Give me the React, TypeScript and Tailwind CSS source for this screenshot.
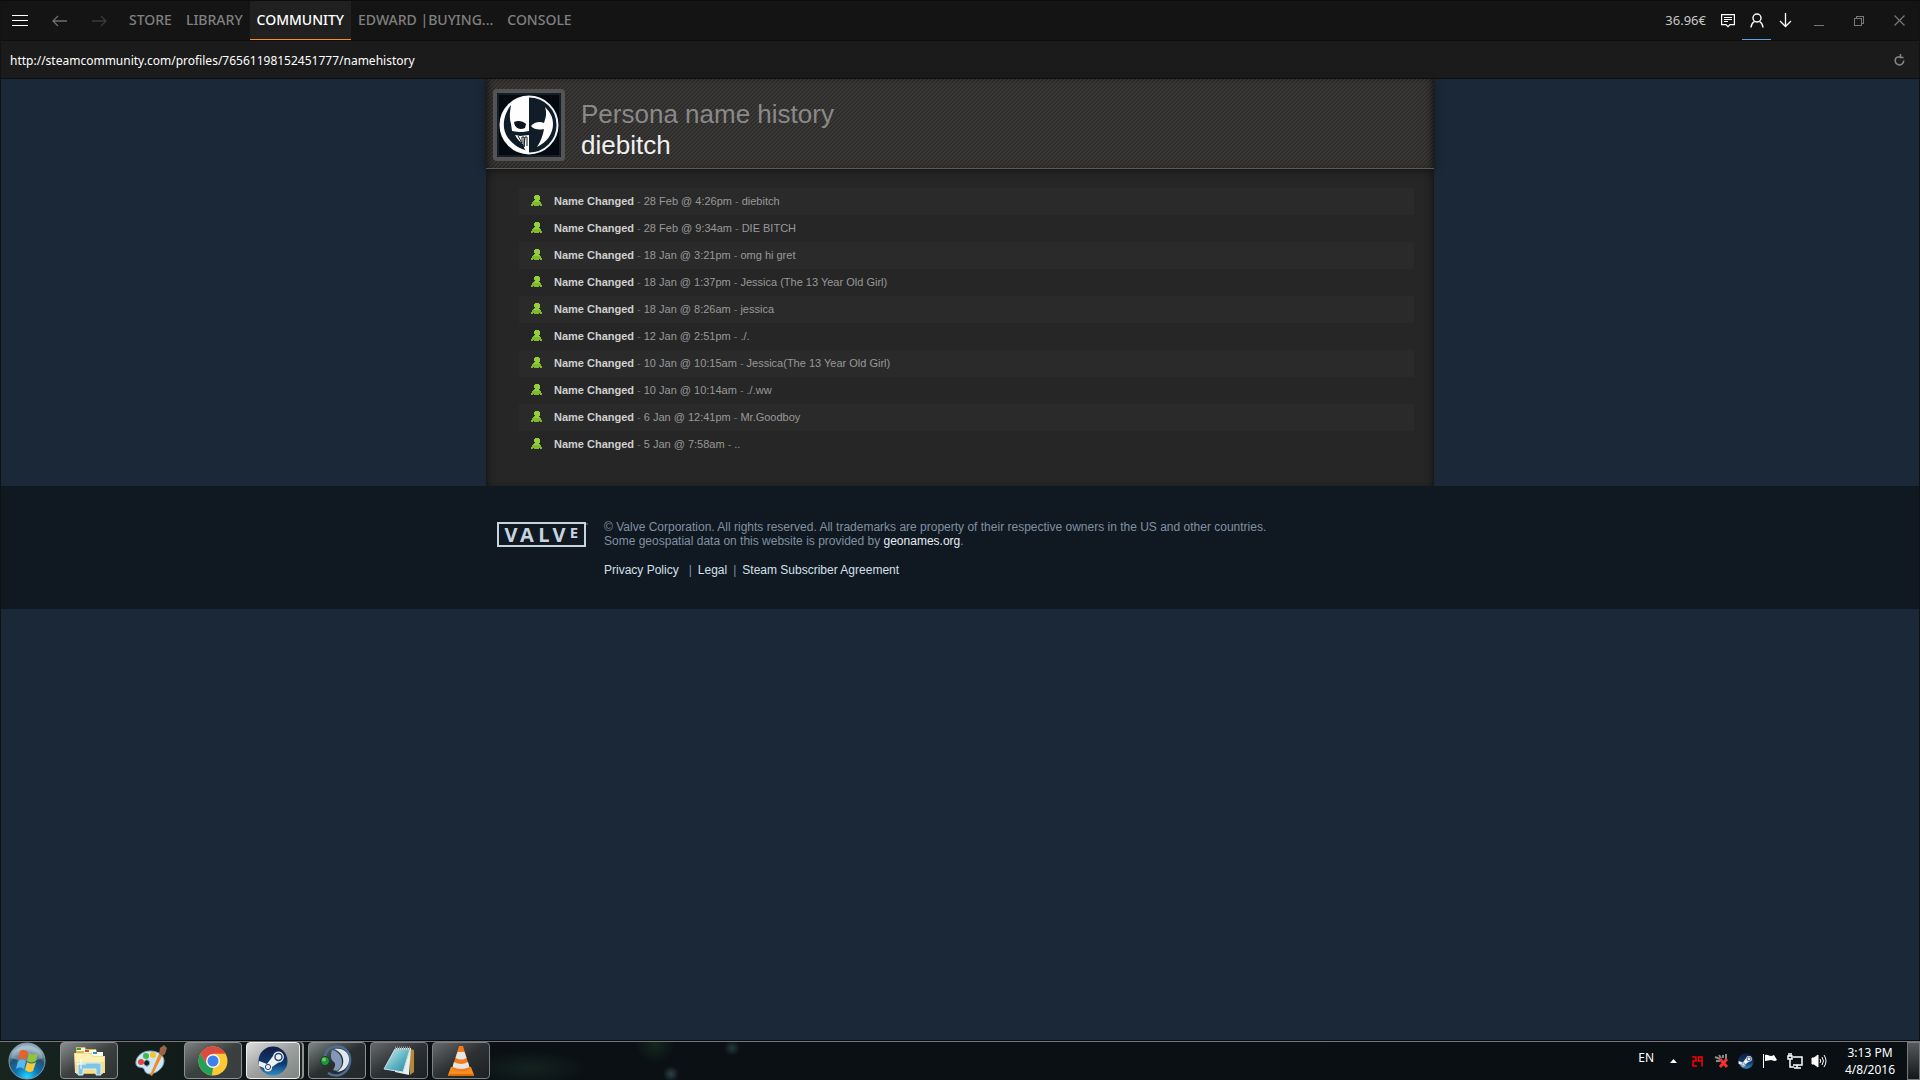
import { useState } from "react";
import type { ReactNode } from "react";

interface HistoryEntry {
  date: string;
  name: string;
}

const history: HistoryEntry[] = [
  { date: "28 Feb @ 4:26pm", name: "diebitch" },
  { date: "28 Feb @ 9:34am", name: "DIE BITCH" },
  { date: "18 Jan @ 3:21pm", name: "omg hi gret" },
  { date: "18 Jan @ 1:37pm", name: "Jessica (The 13 Year Old Girl)" },
  { date: "18 Jan @ 8:26am", name: "jessica" },
  { date: "12 Jan @ 2:51pm", name: "./." },
  { date: "10 Jan @ 10:15am", name: "Jessica(The 13 Year Old Girl)" },
  { date: "10 Jan @ 10:14am", name: "./.ww" },
  { date: "6 Jan @ 12:41pm", name: "Mr.Goodboy" },
  { date: "5 Jan @ 7:58am", name: ".." },
];

const tabs = ["STORE", "LIBRARY", "COMMUNITY", "EDWARD |BUYING...", "CONSOLE"];

function IconButton({ label, className = "", children }: { label: string; className?: string; children: ReactNode }) {
  return (
    <button aria-label={label} className={`flex h-full shrink-0 items-center justify-center ${className}`}>
      {children}
    </button>
  );
}

function TopBar() {
  const [active, setActive] = useState("COMMUNITY");

  return (
    <header className="flex h-10 items-stretch border-t border-[#0c0c0c] bg-[#141414] font-['Noto_Sans','Open_Sans',sans-serif]">
      <IconButton label="Menu" className="w-[38px] text-white">
        <svg width="16" height="13" stroke="currentColor" shapeRendering="crispEdges">
          <path d="M0 1.5h16M0 6.5h16M0 11.5h16" />
        </svg>
      </IconButton>
      <IconButton label="Back" className="w-10 text-[#6e6e6e]">
        <svg width="15" height="12" fill="none" stroke="currentColor" strokeWidth="1.3">
          <path d="M1 6h14M6 1L1 6l5 5" />
        </svg>
      </IconButton>
      <IconButton label="Forward" className="mr-[3px] w-10 text-[#3a3a3a]">
        <svg width="15" height="12" fill="none" stroke="currentColor" strokeWidth="1.3">
          <path d="M0 6h14M9 1l5 5-5 5" />
        </svg>
      </IconButton>
      <nav className="flex">
        {tabs.map((tab) => (
          <button
            key={tab}
            onClick={() => setActive(tab)}
            className={`border-b px-[7px] text-sm font-medium whitespace-nowrap ${
              active === tab ? "border-[#ff8f1c] bg-[#202020] text-white" : "border-transparent text-[#808080]"
            }`}
          >
            {tab}
          </button>
        ))}
      </nav>
      <div className="ml-auto flex items-center">
        <span className="mr-2 text-[13px] text-[#c8c8c8]">36.96€</span>
        <IconButton label="Chat" className="w-7 text-white">
          <svg width="14" height="15" fill="none" stroke="currentColor" strokeWidth="1.2">
            <path d="M.6 1.6h12.800v10H9l-2 2-2-2H.6zM3 4.500h8M3 6.500h8M3 8.500h4" />
          </svg>
        </IconButton>
        <IconButton label="Friends" className="w-[29px] border-b border-[#5ea2e8] text-white">
          <svg width="14" height="15" fill="none" stroke="currentColor" strokeWidth="1.4">
            <circle cx="7" cy="5" r="4" />
            <path d="M1 14.500c.3-3 1.600-5 3.500-6M13 14.500c-.3-3-1.600-5-3.500-6" />
          </svg>
        </IconButton>
        <IconButton label="Downloads" className="w-7 text-white">
          <svg width="13" height="15" fill="none" stroke="currentColor" strokeWidth="1.3">
            <path d="M6.500 0v13.500M1 8l5.500 5.500L12 8" />
          </svg>
        </IconButton>
        <IconButton label="Minimize" className="w-10 text-[#777]">
          <svg width="10" height="10" stroke="currentColor" shapeRendering="crispEdges">
            <path d="M0 9.500h10" />
          </svg>
        </IconButton>
        <IconButton label="Restore" className="w-10 text-[#777]">
          <svg width="10" height="10" fill="none" stroke="currentColor" shapeRendering="crispEdges">
            <path d="M.5 2.500h7v7h-7zM2.500 2.500v-2h7v7h-2" />
          </svg>
        </IconButton>
        <IconButton label="Close" className="w-10 text-[#777]">
          <svg width="11" height="11" fill="none" stroke="currentColor" strokeWidth="1.200">
            <path d="M.5.5l10 10M10.500.5l-10 10" />
          </svg>
        </IconButton>
      </div>
    </header>
  );
}

function AddressBar() {
  return (
    <div className="flex h-[39px] items-center border-y border-[#0e0e0e] bg-[#1b1b1b] pl-[9px] font-['Noto_Sans','Open_Sans',sans-serif]">
      <input
        aria-label="Address"
        defaultValue="http://steamcommunity.com/profiles/76561198152451777/namehistory"
        className="flex-1 bg-transparent pt-[2px] text-xs text-white outline-none"
      />
      <IconButton label="Reload" className="w-[39px] text-[#888]">
        <svg width="11" height="12" fill="none" stroke="currentColor" strokeWidth="1.500">
          <path d="M2.800 3.200A4.300 4.300 0 1 0 9.800 6.500M6 3h-3M6.500 0v3.500h3" />
        </svg>
      </IconButton>
    </div>
  );
}

function Avatar() {
  return (
    <div className="h-[72px] w-[72px] shrink-0 rounded-sm bg-[#545454] p-1">
      <svg viewBox="0 0 64 64" className="h-full w-full" role="img" aria-label="diebitch">
        <rect width="64" height="64" fill="#050a10" />
        <rect x="1" y="1" width="62" height="62" fill="none" stroke="#26333d" />
        <circle cx="32" cy="32" r="28.500" fill="#101c27" stroke="#f4f8fa" strokeWidth="2" />
        {/* skull half */}
        <path d="M32 3.500A28.500 28.500 0 0 0 32 60.500v-2.500C20 56 9 47 7 35 6 27 9 18 14 12c-1 7-2 13 0 19l1 7 9 1 8-3z" fill="#fff" />
        <path d="M17 29c4-2 9-1 12 2l-1 4c-5 2-10 1-11-6z" fill="#0c151d" />
        <path d="M15 36l6 1h8l3-2v3l-6 1-10-1z" fill="#fff" />
        <path d="M18 42l5 1 9-1v18c-4-2-5-5-6-9-3-2-6-5-8-9z" fill="#fff" />
        <path d="M21 43l4 7v-6h2v10l1-10h2v9" fill="none" stroke="#101c27" />
        {/* mask half */}
        <path d="M34 33c3-4 9-5 13-3 2-6 3-10 1-16 5 5 8 10 8 17 0 10-6 18-16 23 4-6 6-12 7-18-4 1-10 1-13-3z" fill="#fff" />
      </svg>
    </div>
  );
}

function NameHistory() {
  return (
    <main className="mx-auto min-h-[407px] max-w-[948px] bg-[#262626] font-['Liberation_Sans',Arial,sans-serif] shadow-[inset_7px_0_7px_-5px_#151515,inset_-7px_0_7px_-5px_#151515]">
      <div className="flex h-[90px] items-center border-b border-[#5a5a5a] bg-[linear-gradient(135deg,#3b3a38_12%,#2c2b2a_12%,#2c2b2a_25%,#3b3a38_25%,#3b3a38_62%,#2c2b2a_62%,#2c2b2a_75%,#3b3a38_75%)] bg-size-[4px_4px] pt-[2px] pl-[7px] shadow-[inset_7px_0_7px_-5px_#151515,inset_-7px_0_7px_-5px_#151515,0_2px_6px_#161616]">
        <Avatar />
        <h1 className="ml-4 pt-[10px] text-[26px] leading-[31px] text-[#898989]">
          Persona name history
          <br />
          <span className="text-[#f0f0f0]">diebitch</span>
        </h1>
      </div>
      <ul className="pt-[19px] pr-5 pl-[33px] text-[11px]">
        {history.map((entry) => (
          <li key={entry.date} className="flex h-[27px] items-center pl-3 text-[#999] odd:bg-[#2a2a2a]">
            <svg width="11" height="13" className="mr-3 shrink-0" shapeRendering="crispEdges">
              <path d="M4 0h4v1h1v4H8v1h1v1h1v2h1v2H9v-1H8v1H3v-1H2v1H0V9h1V7h1V6h1V5h1V4H3V1h1z" fill="#7fb92e" />
              <path d="M4 0h4v1h1v4H8v1h1v1H3V6h1V4H3V1h1z" fill="#93cf3a" />
            </svg>
            <p>
              <b className="text-[#d0d0d0]">Name Changed</b>
              <span className="mx-[3px] text-[#666]">-</span>
              {entry.date}
              <span className="mx-[3px] text-[#777]">-</span>
              {entry.name}
            </p>
          </li>
        ))}
      </ul>
    </main>
  );
}

function ValveLogo() {
  return (
    <svg width="92" height="25" role="img" aria-label="Valve" className="mt-[2px] shrink-0 font-['Open_Sans','Noto_Sans',sans-serif]">
      <rect x="1" y="1" width="87" height="23" fill="none" stroke="#c6d4df" strokeWidth="2" />
      <g fill="#c6d4df" fontWeight="bold" textAnchor="middle">
        <text x="14" y="20" fontSize="20">V</text>
        <text x="30" y="20" fontSize="20">A</text>
        <text x="47" y="20" fontSize="20">L</text>
        <text x="62" y="20" fontSize="20">V</text>
        <text x="77" y="16" fontSize="15">E</text>
      </g>
      <circle cx="90" cy="2" r="1" fill="#53606c" />
    </svg>
  );
}

function Footer() {
  return (
    <footer className="bg-[#101821] pt-[34px] pb-8 font-['Liberation_Sans',Arial,sans-serif] text-xs leading-[14px] text-[#8091a2]">
      <div className="mx-auto flex max-w-[940px] pl-[7px]">
        <ValveLogo />
        <div className="ml-[15px]">
          <p>
            © Valve Corporation. All rights reserved. All trademarks are property of their respective owners in the US and other countries.
            <br />
            Some geospatial data on this website is provided by{" "}
            <a href="#geonames" className="text-[#e6eef5]">geonames.org</a>.
          </p>
          <p className="mt-[15px]">
            <a href="#privacy" className="text-[#d4e0ea]">Privacy Policy</a>
            <span className="mr-[6px] ml-[10px]">|</span>
            <a href="#legal" className="text-[#d4e0ea]">Legal</a>
            <span className="mx-[6px]">|</span>
            <a href="#agreement" className="text-[#d4e0ea]">Steam Subscriber Agreement</a>
          </p>
        </div>
      </div>
    </footer>
  );
}

function StartIcon() {
  return (
    <svg width="38" height="38" viewBox="0 0 38 38">
      <defs>
        <radialGradient id="orb" cx=".5" cy=".95" r=".8">
          <stop offset="0" stopColor="#27d5ff" />
          <stop offset=".4" stopColor="#0b78b8" />
          <stop offset=".75" stopColor="#24506f" />
          <stop offset="1" stopColor="#8fa9b9" />
        </radialGradient>
      </defs>
      <circle cx="19" cy="19" r="18" fill="url(#orb)" stroke="#7f9db1" />
      <path d="M3 16a16.500 16.500 0 0 1 32 0c-9 4-22 4-32 0z" fill="#dce8ef" opacity=".35" />
      <path d="M12 9c3-2 6-1 8 1l-2 8c-3-2-5-2-8 0z" fill="#e8602b" />
      <path d="M21 11c3 2 6 2 9 0l-2 8c-3 2-6 2-9 0z" fill="#93c33b" />
      <path d="M10 19c3-2 5-2 8 0l-2 8c-3-2-5-2-8 0z" fill="#5bb6ee" />
      <path d="M19 20c3 2 6 2 9 0l-3 9c-3 2-5 1-8-1z" fill="#fbc73b" />
    </svg>
  );
}

function ExplorerIcon() {
  return (
    <svg width="34" height="32" viewBox="0 0 34 32">
      <path d="M4 2h9l1 2h10l1 3h6v22H4z" fill="#d9b75a" />
      <path d="M5 3h8v3H5z" fill="#fffbe4" />
      <path d="M5 3h4v2H5z" fill="#28a735" />
      <path d="M12 5h12v3H12z" fill="#fffbe4" />
      <path d="M13 5h4v2h-4z" fill="#d84a2b" />
      <path d="M20 7h11v4H20z" fill="#fffbe4" />
      <path d="M21 7h4v2h-4z" fill="#2990d6" />
      <path d="M2 8h17l2 3h12v17H3z" fill="#f3df8d" />
      <path d="M3 9h15l2 3h12v5H3z" fill="#fbf0b5" />
      <path d="M6 30V20q0-2 2-2h19q2 0 2 2v10h-5v-6H11v6z" fill="#80c4e6" stroke="#d8f1fb" />
      <path d="M9 14v10M4 19h10" stroke="#fff" />
    </svg>
  );
}

function PaintIcon() {
  return (
    <svg width="34" height="34" viewBox="0 0 34 34">
      <path d="M16 7C7 7 1 14 2 20c1 4 5 3 7 4s1 5 6 6c8 0 15-7 15-13S24 7 16 7zm-1 14a3 3 0 1 1 0-4 3 3 0 0 1 0 4z" fill="#cfe6f5" stroke="#7fa9c5" />
      <circle cx="7" cy="18" r="3" fill="#e3483d" />
      <circle cx="12" cy="12" r="3" fill="#42b649" />
      <circle cx="19" cy="11" r="3" fill="#f6c52d" />
      <path d="M25 10l3 2-10 20-2-1z" fill="#f08a25" />
      <path d="M25 10l1-6 4-3 3 3-2 6-3 2z" fill="#9b6444" />
    </svg>
  );
}

function ChromeIcon() {
  return (
    <svg width="30" height="30" viewBox="0 0 30 30">
      <circle cx="15" cy="15" r="14.500" fill="#fcc934" />
      <path d="M2.400 7.800A14.500 14.500 0 0 1 27.600 7.800H15L8.700 18.600z" fill="#dd4b3e" />
      <path d="M2.400 7.800L8.700 18.600 15 22.200 13.800 29.400A14.500 14.500 0 0 1 2.400 7.800z" fill="#23a05c" />
      <circle cx="15" cy="15" r="7" fill="#f5f5f5" />
      <circle cx="15" cy="15" r="5.500" fill="#3f7fee" />
    </svg>
  );
}

function SteamIcon({ size }: { size: number }) {
  return (
    <svg width={size} height={size} viewBox="0 0 30 30">
      <defs>
        <linearGradient id="steam" x2="0" y2="1">
          <stop stopColor="#101c45" />
          <stop offset=".6" stopColor="#0e3c70" />
          <stop offset="1" stopColor="#2f8fc6" />
        </linearGradient>
      </defs>
      <circle cx="15" cy="15" r="14.500" fill="url(#steam)" />
      <path d="M1 15l8 3 6-8a5.500 5.500 0 1 1 5.500 6.500L14 21a4 4 0 0 1-8 1L1 20z" fill="#f0f0f0" />
      <circle cx="20.500" cy="11" r="3.500" fill="#f0f0f0" stroke="#24477a" strokeWidth="1.500" />
      <circle cx="10" cy="21" r="2.600" fill="none" stroke="#24477a" />
    </svg>
  );
}

function TeamSpeakIcon() {
  return (
    <svg width="34" height="34" viewBox="0 0 34 34" fill="none">
      <path d="M5 12C7 1 21 0 27 7c6 8 3 20-7 24-5 1-9 0-12-2" stroke="#4c6c92" strokeWidth="2.500" />
      <path d="M14 5c10-2 16 5 15 12-1 6-5 10-12 11 5-4 7-8 6-13-1-5-4-8-9-10z" fill="#e1e9f2" />
      <path d="M12 6c6 1 10 6 10 12 0 4-2 7-5 9l-4-1c2-3 3-6 1-8-3-2-4-6-2-12z" fill="#8198b8" />
      <circle cx="5" cy="17" r="4.500" fill="#21913b" stroke="#153e27" />
      <circle cx="4" cy="15.500" r="2" fill="#65cb6a" />
    </svg>
  );
}

function NotepadIcon() {
  return (
    <svg width="32" height="32" viewBox="0 0 32 32">
      <defs>
        <linearGradient id="pad" x2="1" y2="1">
          <stop stopColor="#d5f0f4" />
          <stop offset=".55" stopColor="#5fb4c3" />
          <stop offset="1" stopColor="#2b8399" />
        </linearGradient>
      </defs>
      <path d="M27 4l4 1v22l-4 3z" fill="#b88736" />
      <path d="M13 3h15l-2 27-14-3z" fill="#e9eff0" />
      <path d="M12 4h15l-7 23L1 24z" fill="url(#pad)" stroke="#c7e2e6" />
      <path d="M12 3h16" stroke="#969696" strokeWidth="3" strokeDasharray="1 1" />
    </svg>
  );
}

function VlcIcon() {
  return (
    <svg width="28" height="32" viewBox="0 0 28 32">
      <path d="M4 22h20l3 8v1H1v-1z" fill="#f79020" />
      <path d="M1 29h26v2H1z" fill="#d96c0c" />
      <path d="M12 1h4l7 23q-9 5-18 0z" fill="#f47b17" />
      <path d="M10.500 7h7l2 6q-5 3-11 0z" fill="#e6e6e6" />
      <path d="M7 17q7 4 14 0l1.500 5q-8 4-17 0z" fill="#e6e6e6" />
    </svg>
  );
}

const taskApps = [
  { label: "Windows Explorer", icon: <ExplorerIcon />, frame: "w-[58px] border-[#8d9191] bg-linear-to-br from-[#8b8e8e] via-[#3c4041] to-[#2c3131]" },
  { label: "Paint", icon: <PaintIcon />, frame: "w-[58px] border-transparent" },
  { label: "Google Chrome", icon: <ChromeIcon />, frame: "w-[58px] border-[#8d9191] bg-linear-to-br from-[#7d8180] via-[#3a3f3f] to-[#383d40]" },
  { label: "Steam", icon: <SteamIcon size={30} />, frame: "mr-1 w-[54px] border-[#f0f0f0] bg-linear-to-br from-[#dcdcdc] via-[#9da09f] to-[#7d8582] shadow-[2px_0_0_#1c2020,4px_0_0_#8d9492]" },
  { label: "TeamSpeak", icon: <TeamSpeakIcon />, frame: "w-[58px] border-[#8d9191] bg-linear-to-br from-[#7e8885] via-[#2a3030] to-[#23282a]" },
  { label: "Notepad", icon: <NotepadIcon />, frame: "w-[58px] border-[#7d8181] bg-linear-to-br from-[#676b6d] via-[#2d3133] to-[#1d2123]" },
  { label: "VLC", icon: <VlcIcon />, frame: "w-[58px] border-[#7d8181] bg-linear-to-br from-[#676b6d] via-[#2d3133] to-[#1d2123]" },
];

function Taskbar() {
  return (
    <footer className="border-t border-[#0a0c0f] font-['Noto_Sans','Open_Sans',sans-serif] text-white">
      <div className="flex h-[39px] items-stretch border-t border-[#74787c] bg-linear-to-r from-[#18251f] via-[#0a1014] via-20% to-[#0a0f13]">
        <button aria-label="Start" className="flex w-[60px] items-center pl-2">
          <StartIcon />
        </button>
        <div className="flex gap-1">
          {taskApps.map((app) => (
            <button
              key={app.label}
              aria-label={app.label}
              className={`flex h-[37px] items-center justify-center rounded-sm border ${app.frame}`}
            >
              {app.icon}
            </button>
          ))}
        </div>
        <div className="flex-1 bg-[radial-gradient(circle_at_181px_32px,#2c4247_0px,transparent_8px),radial-gradient(circle_at_242px_6px,#24393a_0px,transparent_8px),radial-gradient(ellipse_60px_18px_at_40px_26px,#13231f,transparent),radial-gradient(ellipse_20px_20px_at_165px_2px,#15261f,transparent)]" />
        <div className="flex items-center">
          <button className="mr-4 pb-[6px] text-xs">EN</button>
          <button aria-label="Show hidden icons" className="mr-[15px]">
            <svg width="7" height="4" fill="#fff"><path d="M3.500 0L7 4H0z" /></svg>
          </button>
          <svg width="11" height="11" fill="none" stroke="#f00" strokeWidth="1.500" className="mr-[11px]">
            <path d="M0 1h4v4H1v5h4M10 10.500V1H6.500v4H10" />
          </svg>
          <svg width="16" height="16" className="mr-2">
            <path d="M1 4l5 2M2 8h4M5 2l2 3M9 2v3M12 1v5" stroke="#888" strokeWidth="2" />
            <path d="M6 6l7 8M13 6l-7 8" stroke="#e33" strokeWidth="3" />
          </svg>
          <SteamIcon size={16} />
          <svg width="16" height="16" className="ml-2" fill="#fff">
            <path d="M1 1h1v14H1zM3 2c3-1 4 1 6 1s2-1 3-1l3 5c-3 2-4 0-6 0S5 8 3 8z" />
          </svg>
          <svg width="16" height="16" className="ml-[9px]" fill="none" stroke="#fff" strokeWidth="1.500">
            <path d="M6 4h9v8H6M10 12v3M7 15h7M1 3h4v3H1zM2 0v3M4 0v3M3 6v8h4" />
          </svg>
          <svg width="16" height="16" className="ml-2" fill="none" stroke="#fff">
            <path d="M1 5h2l4-3v12l-4-3H1z" fill="#fff" />
            <path d="M9 6q1.500 2 0 4M11 4q3 4 0 8M13 2q4 6 0 12" />
          </svg>
          <time className="ml-4 w-[54px] text-center text-xs leading-[17px]">
            3:13 PM
            <br />
            4/8/2016
          </time>
          <button aria-label="Show desktop" className="ml-[10px] h-full w-[13px] border border-[#77797a] bg-linear-to-b from-[#55595b] to-[#14181a]" />
        </div>
      </div>
    </footer>
  );
}

export default function App() {
  return (
    <div className="flex min-h-screen flex-col bg-[#1b2838]">
      <div className="flex flex-1 flex-col border-x border-[#101214]">
        <TopBar />
        <AddressBar />
        <div className="flex-1">
          <NameHistory />
          <Footer />
        </div>
      </div>
      <Taskbar />
    </div>
  );
}
